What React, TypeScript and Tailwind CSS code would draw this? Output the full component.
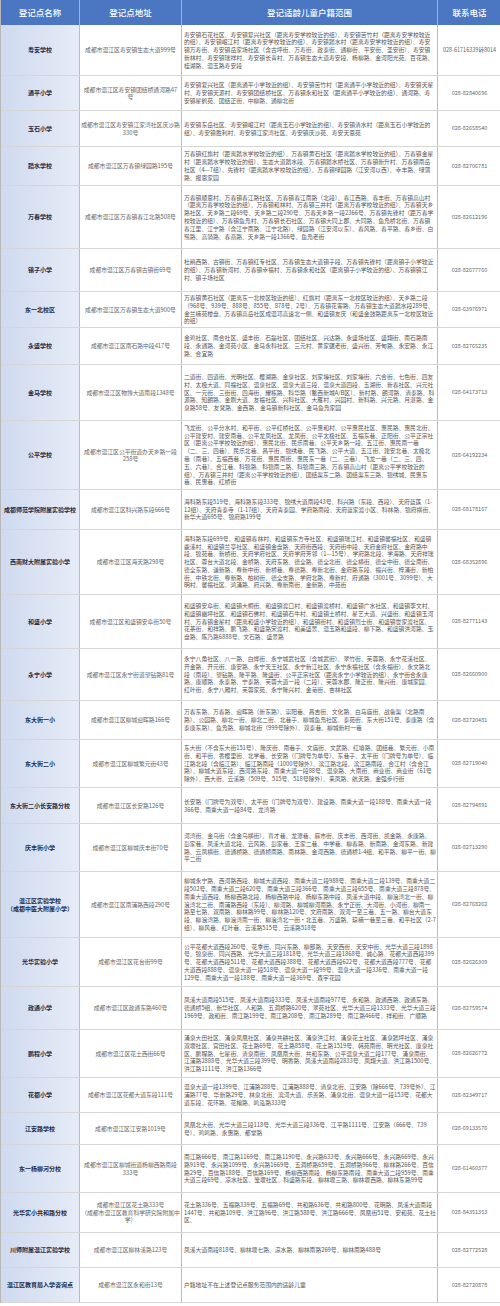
const rows: { n: string; a: string; r: string; p: string; h: string }[] = [
  { n: "寿安学校", a: "成都市温江区寿安镇生态大道999号", r: "寿安镇石花社区、寿安镇复兴社区（距离寿安学校较近的组）、寿安镇苦竹村（距离寿安学校较近的组）、寿安镇岷江村（距离寿安学校较近的组）、寿安镇踏水村（距离寿安学校较近的组）、寿安镇万寿街、寿安镇岳家场社区（含古坪街、万寿街、政泰街、通柳街、平安街、圣安街）、寿安镇新林村、寿安镇瑞祥村、寿安镇长青村、万春镇生态大道寿安段、杨柳路、金河阳光苑、百花路、桂湖路、温玉路寿安段", p: "028-61716339转8014", h: "h-[51px]" },
  { n: "通平小学", a: "成都市温江区寿安镇团结桥通河路47号", r: "寿安镇复兴社区（距离通平小学较近的组）、寿安镇苦竹村（距离通平小学较近的组）、寿安镇天星村、寿安镇天源村、寿安镇团结桥社区、万春镇永和社区（距离通平小学较近的组）、通河路、寿安镇星鹤苑、团结正街、中柳路、通柳北街", p: "028-82840696", h: "h-[35px]" },
  { n: "玉石小学", a: "成都市温江区寿安镇江家湾社区庆沙路330号", r: "寿安镇东岳社区、寿安镇岷江村（距离玉石小学较近的组）、寿安镇清水村（距离玉石小学较近的组）、寿安镇胜利村、寿安镇江家湾社区、寿安镇庆沙苑、寿安天恩苑", p: "028-82658540", h: "h-[36px]" },
  { n: "踏水学校", a: "成都市温江区万春镇绿园路195号", r: "万春镇红旗村（距离踏水学校较近的组）、万春镇黄石社区（距离踏水学校较近的组）、万春镇金星村（距离踏水学校较近的组）、生态大道踏水段、万春镇踏水桥社区、万春镇新升村、万春镇南岳社区（4—7组）、先锋村（距离踏水学校较近的组）、万春镇绿园路（江安河以西）、幸丰路、绿蒲路、报恩家园", p: "028-82706781", h: "h-[39px]" },
  { n: "万春学校", a: "成都市温江区万春镇春江北路508号", r: "万春镇顺恩村、万春镇春江路社区、万春镇春江南路（北段）、春江西路、春丰街、万春镇高山村（距离万春学校较近的组）、万春镇和林村、万春镇三井村（距离万春学校较近的组）、万春镇天乡路社区、天乡路二段69号、天乡路二段290号、万春天乡路一段2366号、万春镇先锋村（距万春学校较近的组）、万春镇鱼凫村、万春镇长石社区、万春镇大同上郡、大同路、鱼凫桥北街、万春镇春江里、江宁路（含江宁南路、江宁北路）、绿园路（江安河以东）、春风路、春平路、春乡街、白鹭路、高骑路、春燕路、天乡路一段1366号、鱼凫老街", p: "028-82612196", h: "h-[63px]" },
  { n: "镇子小学", a: "成都市温江区万春镇古镇街69号", r: "杜鹃西路、古镇街、万春镇红专社区、万春镇生态大道镇子段、万春镇先锋村（距离镇子小学较近的组）、万春镇新河村、万春镇幸福村、万春镇永和社区（距离镇子小学较近的组）、万春镇镇江村、镇子场社区", p: "028-82677760", h: "h-[43px]" },
  { n: "东一北校区", a: "成都市温江区万春镇生态大道900号", r: "万春镇黄石社区（距离东一北校区较近的组）、红旗村（距离东一北校区较近的组）、天乡路二段（968号、939号、888号、855号、878号、2号）、万春镇花客路、万春镇生态大道踏水段289号、金兰楠苑楼盘、万春镇高岳社区成温邛高速北一侧、和盛镇友庆（和盛金鼓路距离东一北校区较近的组）", p: "028-63976971", h: "h-[36px]" },
  { n: "永盛学校", a: "成都市温江区南石路中段417号", r: "金鸡社区、南合社区、盛丰街、石磊社区、团结社区、兴达路、永盛场社区、盛翔街、南石路南段、永通路、金河苑小区、金马永科社区、三元村、黄家碾老街、盛兴街、芳甸路、永宏路、永江路、合宜路", p: "028-82765235", h: "h-[37px]" },
  { n: "金马学校", a: "成都市温江区物博大道南段1348号", r: "二道街、四道街、光明社区、樱湖路、金泉社区、刘家壕社区、刘家壕街、六合街、七色街、四友村、太极大道、同福社区、温泉社区、温泉大道三段、温泉大道四段、五湖街、新春社区、兴元社区、一元街、三街街、四海街、耀栋路、科华路（鳌西新城A/B区）、新村路、朗河路、清泰路、科源路、知朗路、金刷大道、友福社区、兴科社区、大雁村、兴园村、新科路、兴元路、月湛路、金泉路58号、友梵路、金西路、金马镇新科社区、金马鱼凫家园", p: "028-64173713", h: "h-[56px]" },
  { n: "公平学校", a: "成都市温江区公平街道办天乡路一段258号", r: "飞龙街、公平分水村、和平街、公平红桥社区、公平惠和村、公平惠民社区、惠民路、惠民北街、公平建安村、建安南巷、公平龙凤社区、龙凤街、公平太极社区、五福东巷、正阳街、公平正宗社区（距离公平学校较近的组）、惠民北街、民乐南巷、公平天乡路一段、五江街、惠民南一巷（二、三、四巷）、民乐北巷、昌平街、锦绣巷、民飞路、公平大道、五江街、建安北巷、太极北巷（南巷）、五福西巷、万花街、惠民南街、惠民东一巷（二、三巷）、飞龙一巷（二、三、四、五、六巷）、合江巷、科锦路、科锦南二路、科锦南三路、万春镇高山村（距离公平学校较近的组）、万春镇三井村（距离公平学校较近的组）、团结渠东二路、团结渠东三路、锦绣城、民惠东巷、民惠巷、红桥街", p: "028-64192234", h: "h-[69px]" },
  { n: "成都师范学院附属实验学校", a: "成都市温江区科兴路东段666号", r: "海科路东段519号、海科路东段333号、锦绣大道南段43号、科兴路（东段、西段）、天府蓝莲（1-12组）、天府青泰寺（1-17组）、天府青泰园、学府路南段、天府蓝家渡小区、科林路、锦府横街、新华大道695号、锦府路199号", p: "028-68178167", h: "h-[40px]" },
  { n: "西南财大附属实验小学", a: "成都市温江区海天路298号", r: "海科路东段699号、和盛镇春林村、和盛镇东方寺社区、和盛镇瑞江村、和盛镇馨福社区、和盛镇鹿溪村、和盛镇兰亭社区、和盛镇金盘路、天府街西段、天府街中段、天府金府社区、金府路中段、锦苑巷、新桥街、天府学府社区、天府学府芳邻（1—15号）、学府路北段、学海路、天府祥瑞社区、蓉台大道北段、金桥路、天府东路、德全路、德全北街、德全横街、德全中街、德全南街、德全东路、谦新路、尊新中街、新桥巷、尊德路、尊新北街、金府路东段、福兴街、梓涌街、新柏街、中铁北街、尊新路、柏树街、德全支路、学府北路、尊新村、府通路（3001号、3099号）、大明村、馨福社区、鸿涌路、府兴路、尊新南街、金新路、中苑街", p: "028-68352896", h: "h-[65px]" },
  { n: "和盛小学", a: "成都市温江区和盛镇安阜街50号", r: "和盛镇安阜街、和盛镇大桐街、和盛镇渡口村、和盛镇渡桥村、和盛镇广水社区、和盛镇李文村、和盛镇幽坪社区、和盛镇石佛村、和盛镇石牛村、和盛镇土桥村、星艺大道、兴盛街、和盛镇玉河村、万春镇金星村（距离和盛小学较近的组）、和盛镇街村、和盛镇烈士街、和盛镇世家渡社区、花茶街、和祥路、鹏飞路、和盛路宋渡村、和美盛景、温玉路和盛段、柳下路、和盛镇洪河路、玉盘路、陈乃路6888号、文石路、盛景路", p: "028-82771143", h: "h-[54px]" },
  { n: "永宁小学", a: "成都市温江区永宁街道望钻路81号", r: "永宁八角社区、八一路、白烨街、永宁城武社区（含城武街）、翠竹街、芙蓉路、永宁花溪社区、开金路、开元街、康安路、永宁天王社区、永宁新江社区、永宁永福社区（含永福街）、永文路北段（南段）、望钻路、隆平路、隆盛街、公平正宗社区（距离永宁小学较近的组）、永宁街合永康路、康顺路、永泰路、宁泰路、芙蓉大道一段（二段）、芙蓉水郡、隆正街、隆兴街、康城家园、红叶街、永宁八厢村、芙蓉家苑、永宁隆兴村、金菊街、杏林社区", p: "028-82660900", h: "h-[52px]" },
  { n: "东大街一小", a: "成都市温江区柳城迎晖路166号", r: "万春东路、万春路、迎晖路（新东路）、崇阳巷、昌吉街、文化路、白马庙街、战备渠（北路南路）、公园路、柳北一街、柳北二街、北巷子、柳城鱼凫社区、泰苑街、东大街151号、泰康路（含泰康东路）、鱼凫路、柳城北街（999号除外）、双泰巷、柳城新村一巷", p: "028-82720481", h: "h-[39px]" },
  { n: "东大街二小", a: "成都市温江区柳城繁元街43号", r: "东大街（不含东大街151号）、隆庆街、南巷子、文庙街、文武路、红墙路、团结巷、繁元街、小南街、和平街、香樱里街、北学巷、长安路（门牌号为单号）、东巷子、太平街（门牌号为单号）、临江路北段（含临江路）、临江路南段（1000号除外）、滨江路北段、滨江路南段、合江村（含合江路）、柳城大道东段、西河路东段、南熏大道一段88号、温泉路、大南街、商业街、商业街（61号除外）、西大街、云溪路（509号、515号、518号除外）、来凤路、航天路、金强步行街", p: "028-82719040", h: "h-[48px]" },
  { n: "东大街二小长安路分校", a: "成都市温江区长安路126号", r: "长安路（门牌号为双号）、太平街（门牌号为双号）、建设路、南熏大道一段188号、南熏大道一段366号、南熏大道一段84号、龙湾路", p: "028-82794891", h: "h-[36px]" },
  { n: "庆丰街小学", a: "成都市温江区柳城庆丰街70号", r: "河湾街、金乌街（含金乌横街）、育才巷、龙潭巷、麻市街、庆丰街、西河街、凯金路、永康路、彭家巷、凤溪大道北段、云风路、彭家巷、王家二巷、中学巷、柳春路、新南路、金河东路、新建路、云凤横街、德通桥路、德通桥南路、南林路、金河西路、德通桥1-4组、和平路、柳平一街、柳平二街", p: "028-82713290", h: "h-[48px]" },
  { n: "温江区实验学校\n（成都中医大附属小学）", a: "成都市温江区南浦路西段290号", r: "柳城永宁路、西河路西段、柳城大道西段、南熏大道二段988号、南熏大道二段139号、南熏大道二段502号、南熏大道二段620号、南熏大道三段366号、南熏大道三段655号、南熏大道三段878号、南熏大道西段、杨柳西路北段、杨柳西路中段、杨柳东路中段、凤溪大道中段、柳浪湾北一街、柳浪湾北二街、南浦路西段（东段）、柳河路、柳城柳河南路、永宁正街、大河街、小河街、柳南一路至七路、双南路、柳林路99号、柳林路120号、文府南路、双河一至三巷、五一路、柳台大道东段、柳浪湾路、柳浪湾南一街、柳浪湾北一街·北五巷、万盛路、琼楠一巷至三巷、和平社区（2-7组）、柳风巷、红叶巷、云溪路515号、云溪路518号", p: "028-82768262", h: "h-[66px]" },
  { n: "光华实验小学", a: "成都市温江区花台街99号", r: "公平花都大道西段260号、花季街、同兴东路、柳部路、天安西街、天安中街、光华大道三段1898号、锦泉街、同兴西路、光华大道三段1818号、光华大道三段1868号、诚心路、花都大道西段399号、花都大道西段511号、花都大道西段388号、花都大道西段622号、花都大道西段777号、花都大道西段888号、温泉大道一段518号、温泉大道一段99号、温泉大道一段336号、南熏大道一段129号、南熏大道一段188号、南熏大道一段369号、森宇花园", p: "028-82626309", h: "h-[49px]" },
  { n: "政通小学", a: "成都市温江区政通东路460号", r: "凤溪大道南段515号、凤溪大道南段333号、凤溪大道南段977号、永和路、政通西路、政通东路、德通桥5组、新华社区、人和路、五洞桥路620号、翠苑社区、光华大道三段1333号、光华大道三段1969号、政和街、南江路199号、南江路208号、南江路289号、南江路466号、祥和街、广顺路", p: "028-82759574", h: "h-[43px]" },
  { n: "鹏程小学", a: "成都市温江区花土西街66号", r: "涌泉大田社区、涌泉凤凰社区、涌泉共耕社区、涌泉洪江村、涌泉花土社区、涌泉踏坪社区、涌泉双堰社区、官田社区、花土路69号、花土路858号、花土路1519号、韩苑南街、明光社区、康泉社区、鹏程路、七星街、清泉南街、凤凰南大街、共和东路、公平温泉大道二段177号、涌泉南街、江浦路2888号、光华大道三段399号、明香路、凤溪大道南段2833号、凤翔大道、洪江路1500号、洪江路1111号、洪江路1366号", p: "028-82626772", h: "h-[48px]" },
  { n: "花都小学", a: "成都市温江区花都大道东段111号", r: "温泉大道一段1399号、江浦路288号、江浦路888号、清泉北街、江安路（除666号、739号外）、江浦路77号、华新路29号、林泉北街、滨河大道、乐善路、涌泉北街、温泉大道一段153号、花都大道东段、花环路、花榕路、鸣泓路333号", p: "028-82349717", h: "h-[35px]" },
  { n: "江安路学校", a: "成都市温江区江安路1019号", r: "凤凰北大街、光华大道三段118号、光华大道三段336号、江平路1111号、江安路（666号、739号）、鸡鸣路、永惠路、都堂路", p: "028-69133576", h: "h-[32px]" },
  { n: "东一杨柳河分校", a: "成都市温江区柳城街道杨柳西路南段333号", r: "南江路666号、南江路1169号、南江路1190号、永兴路633号、永兴路666号、永兴路669号、永兴路919号、永兴路1099号、永兴路1669号、五洞桥路659号、五洞桥路966号、柳林路266号、百信路29号、百信路188号、百信路169号、杨柳西路南段、杨柳东路南段、南熏大道二段959号、南熏大道三段69号、凉水社区、笼堰社区、科盛路东段、柳林堰三路、柳林堰西路、柳林东路99号", p: "028-61460377", h: "h-[48px]" },
  { n: "光华实小共和路分校", a: "成都市温江区花土路333号\n（成都市温江区教育科学研究院附属中学）", r: "花土路336号、五福路339号、五福路69号、共和路636号、共和路800号、花明路、凤溪大道南段1447号、共和路109号、洪江路96号、洪江路588号、洪江路666号、凤凰街51号、安和苑、花土社区、", p: "028-84351353", h: "h-[40px]" },
  { n: "川师附属温江实验学校", a: "成都市温江区柳林溪路123号", r: "凤溪大道南段818号、柳林堰七路、涼水路、柳林南路269号、柳林南路488号", p: "028-82772528", h: "h-[35px]" },
  { n: "温江区教育局入学咨询点", a: "成都市温江区永和街13号", r: "户籍地址不在上述登记点服务范围内的适龄儿童", p: "028-82720878", h: "h-[35px]" },
];

export default function App() {
  return (
    <div className="w-[500px] h-[1306px] bg-white font-['Noto_Sans_CJK_SC',sans-serif] overflow-hidden">
      <div className="border-l border-[#b8b8b8]">
        <div className="grid grid-cols-[79px_102px_256px_63px] h-[25px] bg-[#4a76c2] text-white text-[8.5px] font-medium">
          <div className="flex items-center justify-center border-r border-[#9db4de]">登记点名称</div>
          <div className="flex items-center justify-center border-r border-[#9db4de]">登记点地址</div>
          <div className="flex items-center justify-center border-r border-[#9db4de]">登记适龄儿童户籍范围</div>
          <div className="flex items-center justify-center">联系电话</div>
        </div>
        {rows.map((row, i) => (
          <div key={i} className={`grid grid-cols-[79px_102px_256px_63px] ${row.h} border-b border-[#d6d6d6]`}>
            <div className="flex items-center justify-center text-center bg-gradient-to-r from-[#cfdaef] to-[#e6ecf7] border-r border-[#bcbcbc] px-[2px] text-[6px] leading-[8px] font-bold text-[#1d2b45] whitespace-pre-line">
              {row.n}
            </div>
            <div className="flex items-center justify-center text-center border-r border-[#bcbcbc] px-[1px] text-[5.8px] leading-[7.5px] text-[#666] whitespace-pre-line">
              {row.a}
            </div>
            <div className="flex items-center border-r border-[#bcbcbc] pl-[2px] pr-[1px] text-[5.8px] leading-[7.8px] text-[#555] overflow-hidden">
              <div>{row.r}</div>
            </div>
            <div className="flex items-center justify-center text-center text-[5.5px] text-[#666]">{row.p}</div>
          </div>
        ))}
      </div>
    </div>
  );
}
